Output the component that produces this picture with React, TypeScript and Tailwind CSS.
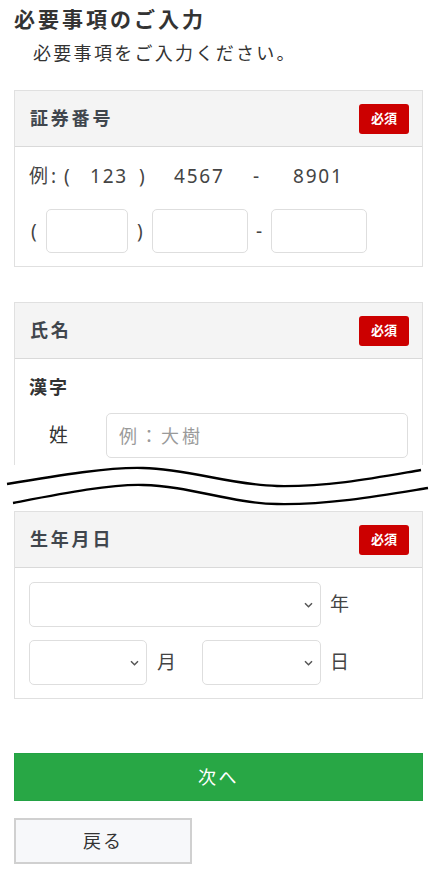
import React from 'react';

const jp = 'font-["Noto_Sans","Noto_Sans_CJK_JP",sans-serif]';

const Badge: React.FC = () => (
  <span className="flex h-[30px] w-[50px] items-center justify-center rounded-[3px] bg-[#cc0000] text-[13px] font-bold leading-none text-white">
    必須
  </span>
);

const CardHeader: React.FC<{ title: string }> = ({ title }) => (
  <div className="flex h-[56px] items-center justify-between border-b border-[#d9d9d9] bg-[#f4f4f4] pl-[15px] pr-[13px]">
    <h2 className="text-[18px] font-bold tracking-[2.8px] text-[#40464d]">{title}</h2>
    <Badge />
  </div>
);

const Chevron: React.FC = () => (
  <svg
    className="pointer-events-none absolute right-[8px] top-1/2 -translate-y-1/2"
    width="9"
    height="6"
    viewBox="0 0 9 6"
    fill="none"
  >
    <path d="M1 1.2l3.5 3.5L8 1.2" stroke="#555" strokeWidth="1.5" />
  </svg>
);

const Select: React.FC<{ className: string }> = ({ className }) => (
  <div className={`relative ${className}`}>
    <select className="h-[45px] w-full appearance-none rounded-[5px] border border-[#dedede] bg-white px-3 text-[17px] outline-none">
      <option value=""></option>
    </select>
    <Chevron />
  </div>
);

const inputCls = 'h-[44px] rounded-[5px] border border-[#dedede] bg-white px-3 outline-none';

export default function App() {
  return (
    <div className={`${jp} w-[437px] bg-white px-[14px] pb-[17px] text-[#333]`}>
      <h1 className="pt-[8px] text-[21px] font-bold leading-[22px] tracking-[3px] text-[#333]">必要事項のご入力</h1>
      <p className="pl-[19px] pt-[12px] text-[18px] leading-[22px] tracking-[2.3px] text-[#333]">
        必要事項をご入力ください。
      </p>

      {/* 証券番号 */}
      <section className="mt-[26px] border border-[#e0e0e0]">
        <CardHeader title="証券番号" />
        <div className="px-[14px] pb-[13px] pt-[15px]">
          <div className="flex h-[28px] items-center text-[19px] tracking-[1.8px] text-[#444]">
            <span className="w-[21px] tracking-normal">例</span>
            <span className="w-[13px] pl-[1px]">:</span>
            <span className="w-[26px] pl-[1px]">(</span>
            <span className="w-[48px] pl-[1px]">123</span>
            <span className="w-[36px] pl-[2px]">)</span>
            <span className="w-[80px] pl-[1px]">4567</span>
            <span className="w-[40px]">-</span>
            <span>8901</span>
          </div>
          <div className="mt-[19px] flex items-center text-[19px] text-[#444]">
            <span className="w-[17px] pl-[2px]">(</span>
            <input className={`${inputCls} w-[82px]`} />
            <span className="w-[24px] pl-[9px]">)</span>
            <input className={`${inputCls} w-[96px]`} />
            <span className="w-[23px] pl-[8px]">-</span>
            <input className={`${inputCls} w-[96px]`} />
          </div>
        </div>
      </section>

      {/* 氏名 (cut off) */}
      <section className="mt-[35px] border-x border-t border-[#e0e0e0]">
        <CardHeader title="氏名" />
        <div className="px-[14px] pb-[7px] pt-[14px]">
          <div className="text-[18px] font-bold leading-[28px] tracking-[2px] text-[#333]">漢字</div>
          <div className="mt-[12px] flex items-center">
            <label className="w-[77px] pl-[20px] text-[19px] text-[#333]">姓</label>
            <input
              className={`${inputCls} h-[45px] flex-1 text-[18px] tracking-[3px] placeholder:text-[#9a9a9a]`}
              placeholder="例：大樹"
            />
          </div>
        </div>
      </section>

      {/* page break wave */}
      <svg className="-mx-[14px] block" width="437" height="46" viewBox="0 0 437 46" fill="none">
        <path d="M7 19 C60 10 110 2 143 3 C190 4 230 20 277 21 C330 22 380 12 421 5" stroke="#000" strokeWidth="2.3" />
        <path d="M13 38 C60 29 110 19 143 20 C190 21 230 38 277 39 C330 40 385 30 428 23" stroke="#000" strokeWidth="2.3" />
      </svg>

      {/* 生年月日 */}
      <section className="border border-[#e0e0e0]">
        <CardHeader title="生年月日" />
        <div className="flex flex-col gap-[13px] px-[14px] pb-[13px] pt-[14px] text-[19px] text-[#444]">
          <div className="flex items-center">
            <Select className="w-[292px]" />
            <span className="ml-[9px]">年</span>
          </div>
          <div className="flex items-center">
            <Select className="w-[118px]" />
            <span className="ml-[10px]">月</span>
            <Select className="ml-[26px] w-[119px]" />
            <span className="ml-[9px]">日</span>
          </div>
        </div>
      </section>

      <button className="mt-[54px] flex h-[48px] w-full items-center justify-center border border-[#23a244] bg-[#28a745] text-[18px] tracking-[2.5px] text-white">
        次へ
      </button>
      <button className="mt-[17px] flex h-[46px] w-[178px] items-center justify-center border-2 border-[#d0d0d0] bg-[#f7f8fa] text-[18px] tracking-[2px] text-[#333]">
        戻る
      </button>
    </div>
  );
}
